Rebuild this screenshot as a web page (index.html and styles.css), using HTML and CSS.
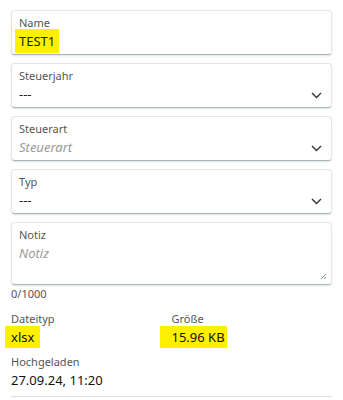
FILE: index.html
```html
<!DOCTYPE html>
<html lang="de">
<head>
    <meta charset="UTF-8">
    <title>Datei</title>
    <link rel="stylesheet" href="styles.css">
</head>
<body>
<div class="form">
    <div class="field">
        <div class="label">Name</div>
        <div class="value"><span class="mark">TEST1</span></div>
    </div>
    <div class="field">
        <div class="label">Steuerjahr</div>
        <div class="value select">---<svg class="chev" width="11" height="7" viewBox="0 0 11 7"><path d="M1 1l4.5 4.5L10 1" fill="none" stroke="#333" stroke-width="1.4"/></svg></div>
    </div>
    <div class="field">
        <div class="label">Steuerart</div>
        <div class="value select placeholder">Steuerart<svg class="chev" width="11" height="7" viewBox="0 0 11 7"><path d="M1 1l4.5 4.5L10 1" fill="none" stroke="#333" stroke-width="1.4"/></svg></div>
    </div>
    <div class="field">
        <div class="label">Typ</div>
        <div class="value select">---<svg class="chev" width="11" height="7" viewBox="0 0 11 7"><path d="M1 1l4.5 4.5L10 1" fill="none" stroke="#333" stroke-width="1.4"/></svg></div>
    </div>
    <div class="field area">
        <div class="label">Notiz</div>
        <div class="value placeholder">Notiz</div>
        <svg class="grip" width="7" height="7" viewBox="0 0 7 7"><path d="M6 1L1 6M6 4L4 6" stroke="#888" stroke-width="1"/></svg>
    </div>
    <div class="counter">0/1000</div>

    <div class="meta">
        <div class="item">
            <div class="label">Dateityp</div>
            <div class="text"><span class="mark wide">xlsx</span></div>
        </div>
        <div class="item">
            <div class="label">Größe</div>
            <div class="text"><span class="mark size">15.96 KB</span></div>
        </div>
        <div class="item">
            <div class="label">Hochgeladen</div>
            <div class="text">27.09.24, 11:20</div>
        </div>
    </div>
    <div class="rule"></div>
</div>
</body>
</html>
```
FILE: styles.css
```css
*{margin:0;padding:0;box-sizing:border-box}
body{
    font-family:"Noto Sans","Open Sans",sans-serif;
    background:#fff;
    color:#222;
}
.form{
    padding:10px 11px 0 11px;
    display:flex;
    flex-direction:column;
}
.field{
    position:relative;
    background:#fff;
    border:1px solid #e4e6e8;
    border-bottom-color:#a7b4bb;
    border-radius:4px;
    box-shadow:0 1px 2px rgba(0,0,0,.12);
    padding:4px 9px 3px 7px;
    margin-bottom:8px;
    height:45px;
}
.field.area{
    height:63px;
    margin-bottom:1px;
}
.label{
    font-size:11px;
    line-height:16px;
    color:#555;
}
.value{
    font-size:13px;
    line-height:20px;
    color:#222;
}
.select{
    display:flex;
    justify-content:space-between;
    align-items:center;
}
.placeholder{
    font-style:italic;
    color:#9a9a9a;
}
.chev{
    margin-top:2px;
}
.mark{
    background:#fff000;
    padding:3px 4px 3px 4px;
    margin-left:-4px;
}
.grip{
    position:absolute;
    right:4px;
    bottom:4px;
}
.counter{
    font-size:11px;
    line-height:16px;
    color:#555;
}
.meta{
    display:grid;
    grid-template-columns:1fr 1fr;
    row-gap:7px;
    margin-top:9px;
}
.meta .text{
    font-size:13px;
    line-height:20px;
    color:#111;
}
.mark.wide{
    padding:2px 6px;
    margin-left:-6px;
}
.mark.size{
    padding:2px 2px 2px 12px;
    margin-left:-12px;
}
.rule{
    margin-top:6px;
    height:1px;
    background:#ddd;
}
```
